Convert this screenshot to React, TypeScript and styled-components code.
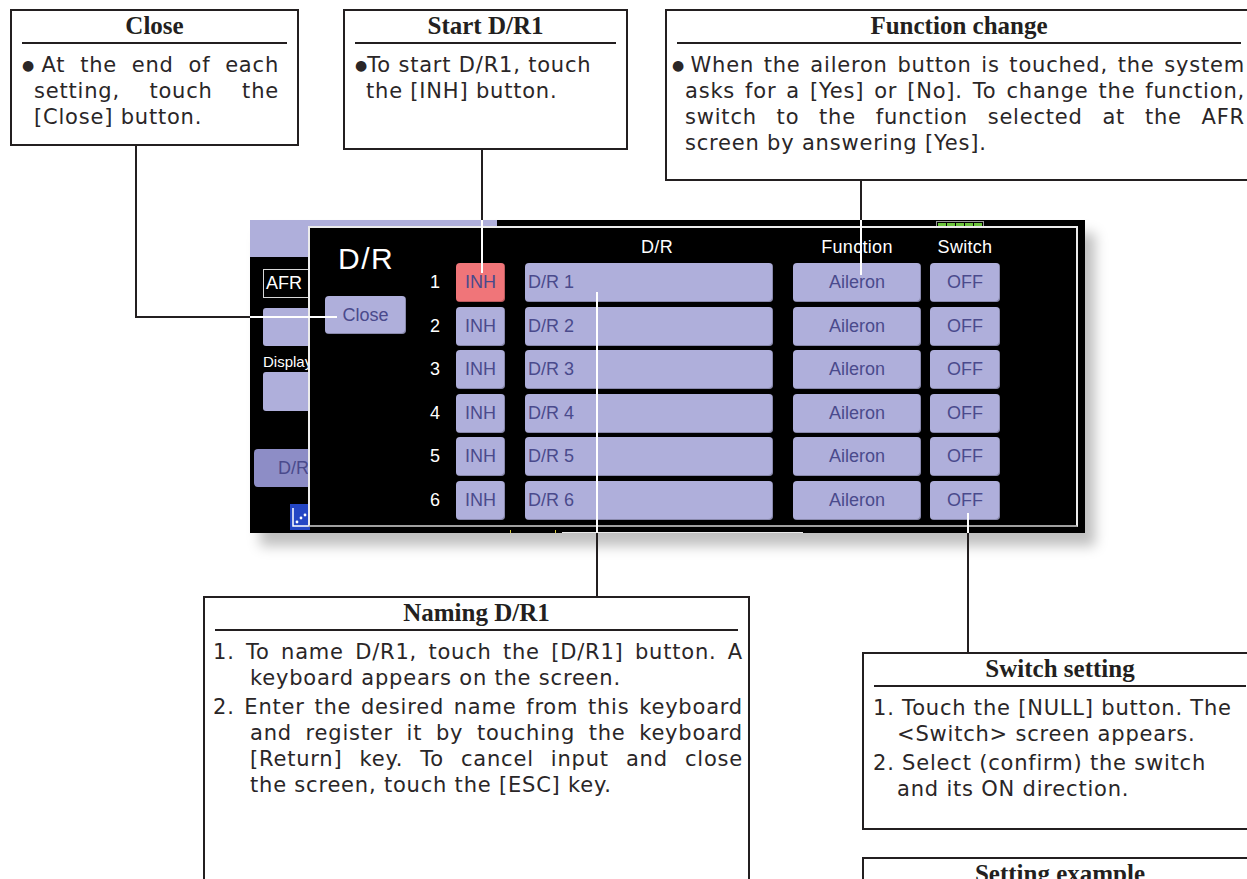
import React from "react";
import styled, { createGlobalStyle } from "styled-components";

const GlobalStyle = createGlobalStyle`
  html, body { margin: 0; padding: 0; background: #ffffff; }
  body { overflow: hidden; }
  * { box-sizing: border-box; }
`;

const INK = "#231f20";
const LAV = "#afafdb";
const KEY_TEXT = "#4a4a8c";

const Canvas = styled.div`
  position: relative;
  width: 1247px;
  height: 879px;
  overflow: hidden;
  background: #fff;
  color: ${INK};
  font-family: "DejaVu Sans", "Liberation Sans", sans-serif;
`;

type BoxProps = { $x: number; $y: number; $w: number; $h: number };

const Callout = styled.section<BoxProps>`
  position: absolute;
  left: ${(p) => p.$x}px;
  top: ${(p) => p.$y}px;
  width: ${(p) => p.$w}px;
  height: ${(p) => p.$h}px;
  border: 2px solid ${INK};
  background: #fff;
  display: flex;
  flex-direction: column;
  padding: 0 10px;
`;

const CalloutTitle = styled.h2`
  margin: 0;
  padding: 1px 0 2px;
  border-bottom: 2px solid ${INK};
  font-family: "Liberation Serif", "Times New Roman", serif;
  font-weight: 700;
  font-size: 25px;
  line-height: 28px;
  text-align: center;
  color: ${INK};
  white-space: nowrap;
`;

const Body = styled.div<{ $ml?: number; $mr?: number }>`
  margin: 0 ${(p) => p.$mr ?? 0}px 0 ${(p) => p.$ml ?? 0}px;
  padding-top: 8px;
  font-size: 21px;
  line-height: 26px;
  letter-spacing: 0.8px;
  color: #2a2627;
  display: flex;
  flex-direction: column;
  gap: 3px;
`;

const Para = styled.div`
  display: flex;
  flex-direction: column;
`;

const Line = styled.div<{ $justify?: boolean; $indent?: number }>`
  padding-left: ${(p) => p.$indent ?? 0}px;
  text-align: ${(p) => (p.$justify ? "justify" : "left")};
  text-align-last: ${(p) => (p.$justify ? "justify" : "left")};
  white-space: ${(p) => (p.$justify ? "normal" : "nowrap")};
`;

const Bullet = styled.span<{ $gap?: number }>`
  font-size: 14px;
  vertical-align: 2px;
  margin-right: ${(p) => p.$gap ?? 0}px;
  letter-spacing: 0;
`;

const Leader = styled.div<BoxProps & { $light?: boolean }>`
  position: absolute;
  left: ${(p) => p.$x}px;
  top: ${(p) => p.$y}px;
  width: ${(p) => p.$w}px;
  height: ${(p) => p.$h}px;
  background: ${(p) => (p.$light ? "#ffffff" : INK)};
  z-index: 5;
`;

/* ---------- transmitter screen ---------- */

const Screen = styled.div`
  position: absolute;
  left: 250px;
  top: 220px;
  width: 835px;
  height: 313px;
  background: #000;
  box-shadow: 10px 13px 12px rgba(0, 0, 0, 0.25);
  overflow: hidden;
  font-family: "Liberation Sans", Arial, sans-serif;
`;

const Backdrop = styled.div`
  display: flex;
  flex-direction: column;
  height: 100%;
`;

const TopRow = styled.div`
  display: flex;
  align-items: flex-start;
  height: 37px;
`;

const TitleStrip = styled.div`
  width: 247px;
  height: 37px;
  background: ${LAV};
`;

const Battery = styled.div`
  margin-left: 439px;
  margin-top: 1px;
  display: flex;
  gap: 1px;
  padding: 1px 1px 0;
  border: 1px solid #9a9a9a;
  border-bottom: none;
`;

const BatteryCell = styled.span`
  width: 8px;
  height: 4px;
  background: #6cc43c;
`;

const SideColumn = styled.div`
  display: flex;
  flex-direction: column;
  align-items: flex-start;
  padding: 12px 0 0 13px;
`;

const AfrBox = styled.div`
  width: 60px;
  height: 29px;
  border: 1px solid #d8d8d8;
  color: #fff;
  font-size: 18px;
  line-height: 27px;
  padding-left: 2px;
`;

const SidePad = styled.div<{ $h: number; $mt: number }>`
  width: 60px;
  height: ${(p) => p.$h}px;
  margin-top: ${(p) => p.$mt}px;
  background: ${LAV};
  border-radius: 3px;
`;

const SideLabel = styled.div`
  margin-top: 6px;
  color: #fff;
  font-size: 15px;
  line-height: 20px;
`;

const ModeButton = styled.div`
  margin: 38px 0 0 -9px;
  width: 70px;
  height: 38px;
  background: #8d8dc6;
  border-radius: 4px;
  color: ${KEY_TEXT};
  font-size: 18px;
  line-height: 38px;
  padding-left: 24px;
`;

const GraphIcon = styled.svg`
  margin: 17px 0 0 27px;
  display: block;
`;

const BottomRow = styled.div`
  margin-top: auto;
  height: 6px;
  display: flex;
  align-items: flex-start;
`;

const TrimLine = styled.span<{ $ml: number; $w: number; $mt: number }>`
  margin-left: ${(p) => p.$ml}px;
  margin-top: ${(p) => p.$mt}px;
  width: ${(p) => p.$w}px;
  height: 1px;
  background: #e8e8e8;
`;

const YellowBracket = styled.span`
  margin-left: 37px;
  width: 46px;
  height: 5px;
  border: 1px solid #d8c840;
  border-top: none;
`;

const Dialog = styled.div`
  position: absolute;
  left: 58px;
  top: 6px;
  width: 770px;
  height: 301px;
  background: #000;
  border: 2px solid #ececec;
  border-bottom-color: #a0a0a0;
  display: flex;
`;

const LeftPane = styled.div`
  width: 115px;
  display: flex;
  flex-direction: column;
  align-items: flex-start;
  padding-left: 15px;
`;

const DialogTitle = styled.div`
  margin: 14px 0 0 13px;
  color: #fff;
  font-size: 30px;
  line-height: 34px;
  letter-spacing: 1.5px;
`;

const Table = styled.div`
  display: grid;
  grid-template-columns: 31px 69px 268px 137px 70px;
  grid-template-rows: 30.5px repeat(6, 39px);
  row-gap: 4.5px;
  align-items: center;
`;

const HeaderCell = styled.div<{ $w?: number; $shift?: number }>`
  width: ${(p) => p.$w ?? 0}px;
  padding-top: 7px;
  padding-left: ${(p) => p.$shift ?? 0}px;
  color: #fff;
  font-size: 18px;
  line-height: 18px;
  text-align: center;
  white-space: nowrap;
  letter-spacing: 0.3px;
`;

const NumCell = styled.div`
  color: #fff;
  font-size: 18px;
  text-align: center;
  padding-right: 11px;
`;

const Key = styled.div<{ $w: number; $red?: boolean; $left?: boolean }>`
  width: ${(p) => p.$w}px;
  height: 39px;
  background: ${(p) => (p.$red ? "#f07579" : LAV)};
  border-radius: 4px;
  box-shadow: inset -1px -1px 0 rgba(0, 0, 0, 0.22);
  color: ${KEY_TEXT};
  font-size: 18px;
  line-height: 39px;
  text-align: ${(p) => (p.$left ? "left" : "center")};
  padding-left: ${(p) => (p.$left ? 3 : 0)}px;
  white-space: nowrap;
`;

const CloseKey = styled(Key)`
  margin-top: 20px;
  height: 38px;
  line-height: 38px;
`;

const rows = [1, 2, 3, 4, 5, 6];

export default function App() {
  return (
    <>
      <GlobalStyle />
      <Canvas>
        <Callout $x={10} $y={9} $w={289} $h={137}>
          <CalloutTitle>Close</CalloutTitle>
          <Body $mr={8}>
            <Para>
              <Line $justify>
                <Bullet>●</Bullet>At the end of each
              </Line>
              <Line $justify $indent={12}>
                setting, touch the
              </Line>
              <Line $indent={12}>[Close] button.</Line>
            </Para>
          </Body>
        </Callout>

        <Callout $x={343} $y={9} $w={285} $h={141}>
          <CalloutTitle>Start D/R1</CalloutTitle>
          <Body>
            <Para>
              <Line>
                <Bullet>●</Bullet>To start D/R1, touch
              </Line>
              <Line $indent={11}>the [INH] button.</Line>
            </Para>
          </Body>
        </Callout>

        <Callout $x={665} $y={9} $w={588} $h={172}>
          <CalloutTitle>Function change</CalloutTitle>
          <Body $ml={-5} $mr={-4}>
            <Para>
              <Line $justify>
                <Bullet $gap={4}>●</Bullet>When the aileron button is touched, the system
              </Line>
              <Line $justify $indent={13}>
                asks for a [Yes] or [No]. To change the function,
              </Line>
              <Line $justify $indent={13}>
                switch to the function selected at the AFR
              </Line>
              <Line $indent={13}>screen by answering [Yes].</Line>
            </Para>
          </Body>
        </Callout>

        <Screen>
          <Backdrop>
            <TopRow>
              <TitleStrip />
              <Battery>
                <BatteryCell />
                <BatteryCell />
                <BatteryCell />
                <BatteryCell />
                <BatteryCell />
              </Battery>
            </TopRow>
            <SideColumn>
              <AfrBox>AFR</AfrBox>
              <SidePad $h={38} $mt={10} />
              <SideLabel>Display</SideLabel>
              <SidePad $h={39} $mt={0} />
              <ModeButton>D/R</ModeButton>
              <GraphIcon width="20" height="26" viewBox="0 0 20 26">
                <rect x="0" y="0" width="20" height="26" fill="#2446c4" />
                <path d="M3 4 V22 H19" stroke="#fff" strokeWidth="1.5" fill="none" />
                <circle cx="7" cy="18" r="1.4" fill="#fff" />
                <circle cx="11" cy="14" r="1.4" fill="#fff" />
                <circle cx="15" cy="11" r="1.4" fill="#fff" />
              </GraphIcon>
            </SideColumn>
            <BottomRow>
              <TrimLine $ml={38} $w={185} $mt={4} />
              <YellowBracket />
              <TrimLine $ml={6} $w={241} $mt={2} />
            </BottomRow>
          </Backdrop>

          <Dialog>
            <LeftPane>
              <DialogTitle>D/R</DialogTitle>
              <CloseKey $w={81}>Close</CloseKey>
            </LeftPane>
            <Table>
              <HeaderCell />
              <HeaderCell />
              <HeaderCell $w={248} $shift={16}>
                D/R
              </HeaderCell>
              <HeaderCell $w={128}>Function</HeaderCell>
              <HeaderCell $w={70}>Switch</HeaderCell>
              {rows.map((n) => (
                <React.Fragment key={n}>
                  <NumCell>{n}</NumCell>
                  <Key $w={49} $red={n === 1}>
                    INH
                  </Key>
                  <Key $w={248} $left>
                    D/R {n}
                  </Key>
                  <Key $w={128}>Aileron</Key>
                  <Key $w={70}>OFF</Key>
                </React.Fragment>
              ))}
            </Table>
          </Dialog>
        </Screen>

        <Callout $x={203} $y={596} $w={547} $h={300}>
          <CalloutTitle>Naming D/R1</CalloutTitle>
          <Body $ml={-2} $mr={-5}>
            <Para>
              <Line $justify>1. To name D/R1, touch the [D/R1] button. A</Line>
              <Line $indent={37}>keyboard appears on the screen.</Line>
            </Para>
            <Para>
              <Line $justify>2. Enter the desired name from this keyboard</Line>
              <Line $justify $indent={37}>
                and register it by touching the keyboard
              </Line>
              <Line $justify $indent={37}>
                [Return] key. To cancel input and close
              </Line>
              <Line $indent={37}>the screen, touch the [ESC] key.</Line>
            </Para>
          </Body>
        </Callout>

        <Callout $x={862} $y={652} $w={396} $h={178}>
          <CalloutTitle>Switch setting</CalloutTitle>
          <Body $ml={-1}>
            <Para>
              <Line>1. Touch the [NULL] button. The</Line>
              <Line $indent={24}>&lt;Switch&gt; screen appears.</Line>
            </Para>
            <Para>
              <Line>2. Select (confirm) the switch</Line>
              <Line $indent={24}>and its ON direction.</Line>
            </Para>
          </Body>
        </Callout>

        <Callout $x={862} $y={857} $w={396} $h={60}>
          <CalloutTitle>Setting example</CalloutTitle>
        </Callout>

        {/* leader lines */}
        <Leader $x={135} $y={146} $w={2} $h={172} />
        <Leader $x={135} $y={316} $w={115} $h={2} />
        <Leader $x={250} $y={316} $w={87} $h={2} $light />

        <Leader $x={481} $y={150} $w={2} $h={70} />
        <Leader $x={481} $y={220} $w={2} $h={53} $light />

        <Leader $x={860} $y={181} $w={2} $h={39} />
        <Leader $x={860} $y={220} $w={2} $h={55} $light />

        <Leader $x={596} $y={292} $w={2} $h={241} $light />
        <Leader $x={596} $y={533} $w={2} $h={63} />

        <Leader $x={967} $y={513} $w={2} $h={20} $light />
        <Leader $x={967} $y={533} $w={2} $h={119} />
      </Canvas>
    </>
  );
}
